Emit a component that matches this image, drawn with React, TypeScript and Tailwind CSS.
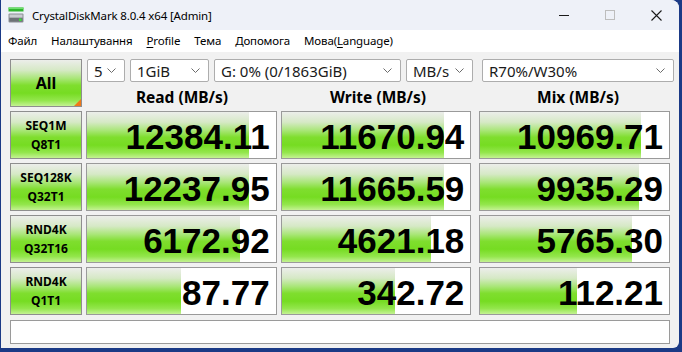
import type { ReactNode } from 'react'

const UI = "font-['Noto_Sans',sans-serif]"

const fillGradient =
  'bg-[linear-gradient(to_bottom,#eceeea_0%,#d6e9c6_22%,#a9e678_40%,#7fde2e_55%,#76dc22_72%,#93e64c_88%,#c4f293_100%)]'

type Row = {
  name: string
  sub: string
  cells: { value: string; fill: number }[]
}

const rows: Row[] = [
  {
    name: 'SEQ1M',
    sub: 'Q8T1',
    cells: [
      { value: '12384.11', fill: 162 },
      { value: '11670.94', fill: 162 },
      { value: '10969.71', fill: 161 },
    ],
  },
  {
    name: 'SEQ128K',
    sub: 'Q32T1',
    cells: [
      { value: '12237.95', fill: 162 },
      { value: '11665.59', fill: 162 },
      { value: '9935.29', fill: 159 },
    ],
  },
  {
    name: 'RND4K',
    sub: 'Q32T16',
    cells: [
      { value: '6172.92', fill: 153 },
      { value: '4621.18', fill: 149 },
      { value: '5765.30', fill: 152 },
    ],
  },
  {
    name: 'RND4K',
    sub: 'Q1T1',
    cells: [
      { value: '87.77', fill: 94 },
      { value: '342.72', fill: 113 },
      { value: '112.21', fill: 97 },
    ],
  },
]

function Chevron() {
  return (
    <svg width="9" height="5" viewBox="0 0 9 5" className="shrink-0">
      <path d="M0.5 0.5 L4.5 4.5 L8.5 0.5" fill="none" stroke="#6b6b6b" strokeWidth="1" />
    </svg>
  )
}

function Combo({ value, width, className = '' }: { value: string; width: string; className?: string }) {
  return (
    <div
      className={`${width} ${className} h-[23px] flex items-center justify-between rounded-[2px] border border-[#adadad] bg-white pl-[6px] pr-[8px] text-[15px] leading-[20px] text-[#1a1a1a]`}
    >
      <span className="whitespace-nowrap">{value}</span>
      <Chevron />
    </div>
  )
}

function GreenButton({ children, className = '' }: { children: ReactNode; className?: string }) {
  return (
    <div
      className={`relative w-[72px] shrink-0 border border-[#8e8e8e] ${fillGradient} flex flex-col items-center justify-center text-black font-bold ${className}`}
    >
      {children}
    </div>
  )
}

function ResultCell({ value, fill, className = '' }: { value: string; fill: number; className?: string }) {
  return (
    <div className={`relative h-12 w-[192px] border border-[#9a9a9a] bg-white ${className}`}>
      <div className={`absolute inset-y-0 left-0 ${fillGradient}`} style={{ width: `${fill}px` }} />
      <div className="relative flex h-full items-center justify-end pr-[6px] pt-[3px] font-['Liberation_Sans',Arial,sans-serif] text-[35px] font-bold leading-none text-black">
        {value}
      </div>
    </div>
  )
}

function DiskIcon() {
  return (
    <svg width="16" height="16" viewBox="0 0 16 16">
      <rect x="0.5" y="0.5" width="15" height="4" fill="#2fb52f" />
      <rect x="0.5" y="0.5" width="15" height="1.5" fill="#6fe06f" />
      <rect x="0.5" y="6.5" width="15" height="9" rx="1" fill="#8a8f95" />
      <rect x="1.5" y="7.5" width="13" height="3" fill="#c9ccd0" />
      <rect x="1.5" y="11" width="13" height="3.5" fill="#6d7277" />
      <rect x="11" y="11.5" width="2.5" height="2.5" fill="#3adf3a" />
    </svg>
  )
}

export default function App() {
  return (
    <div className={`h-[352px] w-[682px] overflow-hidden bg-[#1b3a86] pl-px pr-[3px] pb-[4px] ${UI}`}>
      <div className="flex h-full flex-col overflow-hidden rounded-tr-[8px] rounded-br-[6px] bg-[#f1f1f1]">
        {/* title bar */}
        <div className="flex h-[30px] shrink-0 items-center bg-[#eef1f8] pl-[7px] text-[11.5px] tracking-[-0.15px] text-black">
          <DiskIcon />
          <span className="ml-[8px] pt-px">CrystalDiskMark 8.0.4 x64 [Admin]</span>
          <div className="ml-auto flex h-full items-center">
            <div className="flex h-full w-[46px] items-center justify-center">
              <div className="h-px w-[10px] bg-[#1a1a1a]" />
            </div>
            <div className="flex h-full w-[46px] items-center justify-center">
              <div className="h-[10px] w-[10px] border border-[#bdbdbd]" />
            </div>
            <div className="flex h-full w-[46px] items-center justify-center">
              <svg width="11" height="11" viewBox="0 0 11 11">
                <path d="M0.5 0.5 L10.5 10.5 M10.5 0.5 L0.5 10.5" stroke="#1a1a1a" strokeWidth="1.1" />
              </svg>
            </div>
          </div>
        </div>

        {/* menu bar */}
        <div className="flex h-[22px] shrink-0 items-center gap-[14px] bg-white pl-[7px] text-[11.5px] tracking-[-0.15px] text-black">
          <span>Файл</span>
          <span>Налаштування</span>
          <span>
            <span className="underline underline-offset-2">P</span>rofile
          </span>
          <span>Тема</span>
          <span>Допомога</span>
          <span>
            Мова(<span className="underline underline-offset-2">L</span>anguage)
          </span>
        </div>

        {/* main */}
        <div className="flex flex-col px-[9px] pt-[7px]">
          <div className="flex h-12">
            <GreenButton className="h-12">
              <span className="text-[16px]">All</span>
              <div className="absolute bottom-0 right-0 h-0 w-0 border-b-[7px] border-l-[7px] border-b-[#f07818] border-l-transparent" />
            </GreenButton>
            <div className="ml-[5px] flex flex-col">
              <div className="flex items-center">
                <Combo value="5" width="w-[38px]" />
                <Combo value="1GiB" width="w-[79px]" className="ml-[5px]" />
                <Combo value="G: 0% (0/1863GiB)" width="w-[187px]" className="ml-[5px]" />
                <Combo value="MB/s" width="w-[67px]" className="ml-[5px]" />
                <Combo value="R70%/W30%" width="w-[192px]" className="ml-[9px]" />
              </div>
              <div className="-ml-px mt-[6px] flex text-[15.5px] font-bold leading-[18px] text-black">
                <div className="w-[192px] text-center">Read (MB/s)</div>
                <div className="ml-1 w-[192px] text-center">Write (MB/s)</div>
                <div className="ml-2 w-[192px] text-center">Mix (MB/s)</div>
              </div>
            </div>
          </div>

          <div className="mt-1 flex flex-col gap-1">
            {rows.map((row, i) => (
              <div key={i} className="flex h-12">
                <GreenButton className="h-12 text-[12px] leading-[19px]">
                  <span>{row.name}</span>
                  <span>{row.sub}</span>
                </GreenButton>
                <ResultCell value={row.cells[0].value} fill={row.cells[0].fill} className="ml-1" />
                <ResultCell value={row.cells[1].value} fill={row.cells[1].fill} className="ml-1" />
                <ResultCell value={row.cells[2].value} fill={row.cells[2].fill} className="ml-2" />
              </div>
            ))}
          </div>

          <div className="mt-[5px] h-[24px] border border-[#9a9a9a] bg-white" />
        </div>
      </div>
    </div>
  )
}
